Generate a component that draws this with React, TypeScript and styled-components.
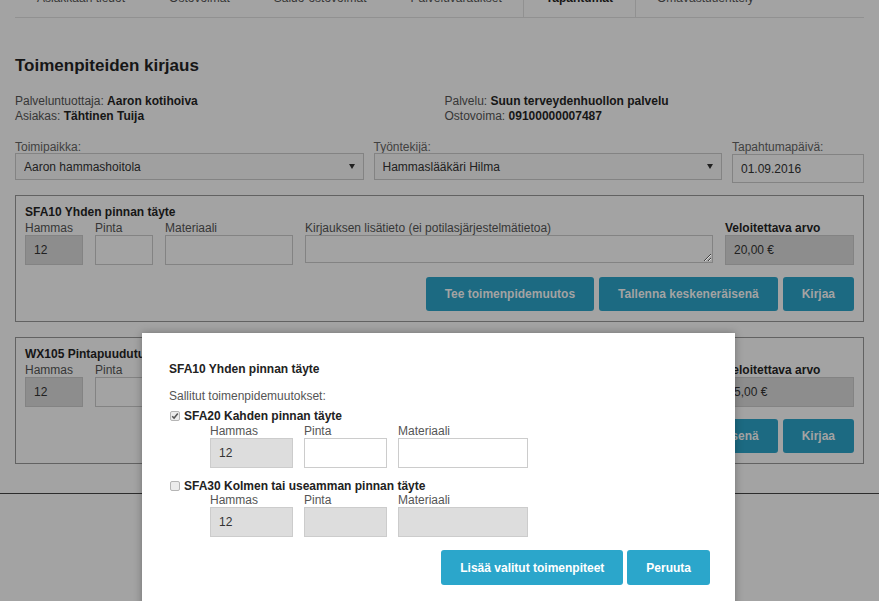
import React from "react";
import styled, { createGlobalStyle, ThemeProvider } from "styled-components";

type Palette = {
  bg: string;
  text: string;
  strong: string;
  muted: string;
  label: string;
  line: string;
  cardBorder: string;
  inputBorder: string;
  inputBg: string;
  selectBg: string;
  disabledBg: string;
  inputText: string;
  primary: string;
  onPrimary: string;
  rule: string;
  checkBorder: string;
  checkBg: string;
  checkMark: string;
};

/* Colours of the page as it looks normally */
const normal: Palette = {
  bg: "#ffffff",
  text: "#222222",
  strong: "#222222",
  muted: "#555555",
  label: "#666666",
  line: "#e3e3e3",
  cardBorder: "#999999",
  inputBorder: "#cccccc",
  inputBg: "#ffffff",
  selectBg: "#fafafa",
  disabledBg: "#dddddd",
  inputText: "#333333",
  primary: "#2ba6cb",
  onPrimary: "#ffffff",
  rule: "#444444",
  checkBorder: "#b5b5b5",
  checkBg: "#ececec",
  checkMark: "#555555",
};

/* The same colours seen through the modal's dark backdrop (black at 36%) */
const dim = (hex: string) => {
  const n = parseInt(hex.slice(1), 16);
  const ch = (v: number) => Math.round(v * 0.64).toString(16).padStart(2, "0");
  return `#${ch((n >> 16) & 255)}${ch((n >> 8) & 255)}${ch(n & 255)}`;
};

const dimmed: Palette = Object.fromEntries(
  Object.entries(normal).map(([k, v]) => [k, dim(v)])
) as Palette;

const GlobalStyle = createGlobalStyle`
  html, body { margin: 0; padding: 0; background: ${dimmed.bg}; overflow: hidden; }
  body {
    font-family: "Liberation Sans", Arial, Helvetica, sans-serif;
    font-size: 12px;
  }
  * { box-sizing: border-box; }
`;

const Screen = styled.div`
  position: relative;
  height: 601px;
  overflow: hidden;
`;

const Page = styled.div`
  height: 601px;
  padding: 0 15px;
  background: ${(p) => p.theme.bg};
  color: ${(p) => p.theme.text};
`;

const TabBar = styled.nav`
  display: flex;
  margin-top: -22px;
  height: 40px;
  border-bottom: 1px solid ${(p) => p.theme.line};
`;

const Tab = styled.div<{ $active?: boolean }>`
  display: flex;
  align-items: center;
  padding: 0 22px;
  font-size: 12px;
  color: ${(p) => (p.$active ? p.theme.strong : p.theme.muted)};
  font-weight: ${(p) => (p.$active ? 700 : 400)};
  border-left: 1px solid ${(p) => (p.$active ? p.theme.line : "transparent")};
  border-right: 1px solid ${(p) => (p.$active ? p.theme.line : "transparent")};
  margin: 0 -1px;
`;

const Title = styled.h1`
  margin: 38px 0 0;
  font-size: 17px;
  line-height: 20px;
  font-weight: 700;
  color: ${(p) => p.theme.strong};
`;

const InfoGrid = styled.div`
  display: grid;
  grid-template-columns: 1fr 1fr;
  column-gap: 10px;
  margin-top: 18px;
  line-height: 15px;
`;

const InfoLine = styled.div`
  color: ${(p) => p.theme.muted};
  b { color: ${(p) => p.theme.strong}; }
`;

const FieldsRow = styled.div`
  display: grid;
  grid-template-columns: 1fr 1fr 132px;
  column-gap: 10px;
  margin-top: 17px;
  align-items: start;
`;

const TopLabel = styled.label`
  display: block;
  line-height: 12px;
  color: ${(p) => p.theme.label};
`;

const SelectWrap = styled.div`
  position: relative;
  height: 27px;
`;

const Select = styled.select`
  appearance: none;
  width: 100%;
  height: 27px;
  border: 1px solid ${(p) => p.theme.inputBorder};
  background: ${(p) => p.theme.selectBg};
  padding: 0 8px;
  font: inherit;
  font-size: 12px;
  color: ${(p) => p.theme.inputText};
  outline: none;
`;

const Arrow = styled.svg`
  position: absolute;
  right: 9px;
  top: 11px;
  pointer-events: none;
  fill: ${(p) => p.theme.inputText};
`;

const DateInput = styled.input`
  display: block;
  width: 100%;
  height: 29px;
  margin-top: 1px;
  border: 1px solid ${(p) => p.theme.inputBorder};
  padding: 0 8px;
  font: inherit;
  font-size: 12px;
  color: ${(p) => p.theme.inputText};
  background: ${(p) => p.theme.inputBg};
`;

const Card = styled.section<{ $first?: boolean }>`
  margin-top: ${(p) => (p.$first ? "12px" : "15px")};
  border: 1px solid ${(p) => p.theme.cardBorder};
  padding: 10px 9px;
`;

const CardTitle = styled.div`
  font-weight: 700;
  line-height: 13px;
  color: ${(p) => p.theme.strong};
  white-space: nowrap;
`;

const CardGrid = styled.div`
  display: grid;
  grid-template-columns: 58px 58px 128px 1fr 129px;
  column-gap: 12px;
  margin-top: 2px;
`;

const FieldLabel = styled.div<{ $strong?: boolean }>`
  line-height: 14px;
  color: ${(p) => (p.$strong ? p.theme.strong : p.theme.muted)};
  font-weight: ${(p) => (p.$strong ? 700 : 400)};
  white-space: nowrap;
`;

const Input = styled.input`
  display: block;
  width: 100%;
  height: 30px;
  border: 1px solid ${(p) => p.theme.inputBorder};
  padding: 0 8px;
  font: inherit;
  font-size: 12px;
  color: ${(p) => p.theme.inputText};
  background: ${(p) => p.theme.inputBg};
  &:disabled {
    background: ${(p) => p.theme.disabledBg};
    color: ${(p) => p.theme.inputText};
    -webkit-text-fill-color: ${(p) => p.theme.inputText};
    opacity: 1;
  }
`;

const TextArea = styled.textarea`
  display: block;
  width: 100%;
  height: 28px;
  border: 1px solid ${(p) => p.theme.inputBorder};
  padding: 6px 8px;
  font: inherit;
  font-size: 12px;
  resize: both;
  background: ${(p) => p.theme.inputBg};
`;

const Actions = styled.div<{ $gap?: number; $top?: number }>`
  display: flex;
  justify-content: flex-end;
  gap: ${(p) => p.$gap ?? 5}px;
  margin-top: ${(p) => p.$top ?? 12}px;
`;

const Button = styled.button<{ $h?: number }>`
  height: ${(p) => p.$h ?? 34}px;
  padding: 0 19px;
  border: none;
  border-radius: 3px;
  background: ${(p) => p.theme.primary};
  color: ${(p) => p.theme.onPrimary};
  font-family: inherit;
  font-size: 12px;
  font-weight: 700;
  white-space: nowrap;
`;

const Rule = styled.hr`
  margin: 29px -15px 0;
  border: none;
  border-top: 1px solid ${(p) => p.theme.rule};
  height: 0;
`;

const Modal = styled.div`
  position: absolute;
  top: 333px;
  left: 142px;
  width: 593px;
  height: 300px;
  background: ${(p) => p.theme.bg};
  color: ${(p) => p.theme.text};
  box-shadow: 0 0 8px rgba(0, 0, 0, 0.3);
  padding: 30px 25px 0 27px;
  z-index: 11;
`;

const ModalTitle = styled.div`
  font-weight: 700;
  line-height: 13px;
  color: ${(p) => p.theme.strong};
`;

const Hint = styled.div`
  margin-top: 13px;
  line-height: 14px;
  color: ${(p) => p.theme.muted};
`;

const Option = styled.div<{ $top: number }>`
  margin-top: ${(p) => p.$top}px;
`;

const OptionHeader = styled.label`
  display: flex;
  align-items: center;
  font-weight: 700;
  line-height: 14px;
  color: ${(p) => p.theme.strong};
`;

const Check = styled.span`
  display: inline-flex;
  align-items: center;
  justify-content: center;
  width: 10px;
  height: 10px;
  margin: 0 4px 0 1px;
  border: 1px solid ${(p) => p.theme.checkBorder};
  border-radius: 2px;
  background: ${(p) => p.theme.checkBg};
  svg { stroke: ${(p) => p.theme.checkMark}; }
`;

const SubGrid = styled.div<{ $top: number }>`
  display: grid;
  grid-template-columns: 83px 83px 130px;
  column-gap: 11px;
  padding-left: 41px;
  margin-top: ${(p) => p.$top}px;
`;

const SubLabel = styled.div`
  line-height: 13px;
  color: ${(p) => p.theme.muted};
`;

type CardData = {
  title: string;
  tooth: string;
  price: string;
};

const cards: CardData[] = [
  { title: "SFA10 Yhden pinnan täyte", tooth: "12", price: "20,00 €" },
  { title: "WX105 Pintapuudutus", tooth: "12", price: "5,00 €" },
];

const tabs = [
  "Asiakkaan tiedot",
  "Ostovoimat",
  "Saldo-ostovoimat",
  "Palveluvaraukset",
  "Tapahtumat",
  "Omavastuuerittely",
];

const CheckBox = ({ checked }: { checked?: boolean }) => (
  <Check>
    {checked && (
      <svg width="8" height="8" viewBox="0 0 8 8">
        <path d="M1.2 4.2 L3.1 6.1 L6.8 1.6" fill="none" strokeWidth="1.5" />
      </svg>
    )}
  </Check>
);

const ProcedureCard = ({ data, first }: { data: CardData; first?: boolean }) => (
  <Card $first={first}>
    <CardTitle>{data.title}</CardTitle>
    <CardGrid>
      <div>
        <FieldLabel>Hammas</FieldLabel>
        <Input disabled defaultValue={data.tooth} />
      </div>
      <div>
        <FieldLabel>Pinta</FieldLabel>
        <Input />
      </div>
      <div>
        <FieldLabel>Materiaali</FieldLabel>
        <Input />
      </div>
      <div>
        <FieldLabel>Kirjauksen lisätieto (ei potilasjärjestelmätietoa)</FieldLabel>
        <TextArea />
      </div>
      <div>
        <FieldLabel $strong>Veloitettava arvo</FieldLabel>
        <Input disabled defaultValue={data.price} />
      </div>
    </CardGrid>
    <Actions>
      <Button>Tee toimenpidemuutos</Button>
      <Button>Tallenna keskeneräisenä</Button>
      <Button>Kirjaa</Button>
    </Actions>
  </Card>
);

const SubFields = ({ top, enabled }: { top: number; enabled: boolean }) => (
  <SubGrid $top={top}>
    <div>
      <SubLabel>Hammas</SubLabel>
      <Input disabled defaultValue="12" />
    </div>
    <div>
      <SubLabel>Pinta</SubLabel>
      <Input disabled={!enabled} />
    </div>
    <div>
      <SubLabel>Materiaali</SubLabel>
      <Input disabled={!enabled} />
    </div>
  </SubGrid>
);

const SelectField = ({ label, value }: { label: string; value: string }) => (
  <div>
    <TopLabel>{label}</TopLabel>
    <SelectWrap>
      <Select defaultValue="v">
        <option value="v">{value}</option>
      </Select>
      <Arrow width="6" height="5" viewBox="0 0 6 5">
        <path d="M0 0 H6 L3 5 Z" />
      </Arrow>
    </SelectWrap>
  </div>
);

export default function App() {
  return (
    <Screen>
      <GlobalStyle />
      <ThemeProvider theme={dimmed}>
        <Page>
          <TabBar>
            {tabs.map((t) => (
              <Tab key={t} $active={t === "Tapahtumat"}>
                {t}
              </Tab>
            ))}
          </TabBar>
          <Title>Toimenpiteiden kirjaus</Title>
          <InfoGrid>
            <div>
              <InfoLine>
                Palveluntuottaja: <b>Aaron kotihoiva</b>
              </InfoLine>
              <InfoLine>
                Asiakas: <b>Tähtinen Tuija</b>
              </InfoLine>
            </div>
            <div>
              <InfoLine>
                Palvelu: <b>Suun terveydenhuollon palvelu</b>
              </InfoLine>
              <InfoLine>
                Ostovoima: <b>09100000007487</b>
              </InfoLine>
            </div>
          </InfoGrid>
          <FieldsRow>
            <SelectField label="Toimipaikka:" value="Aaron hammashoitola" />
            <SelectField label="Työntekijä:" value="Hammaslääkäri Hilma" />
            <div>
              <TopLabel>Tapahtumapäivä:</TopLabel>
              <DateInput defaultValue="01.09.2016" />
            </div>
          </FieldsRow>
          {cards.map((c, i) => (
            <ProcedureCard key={c.title} data={c} first={i === 0} />
          ))}
          <Rule />
        </Page>
      </ThemeProvider>
      <ThemeProvider theme={normal}>
        <Modal>
          <ModalTitle>SFA10 Yhden pinnan täyte</ModalTitle>
          <Hint>Sallitut toimenpidemuutokset:</Hint>
          <Option $top={6}>
            <OptionHeader>
              <CheckBox checked />
              SFA20 Kahden pinnan täyte
            </OptionHeader>
            <SubFields top={2} enabled />
          </Option>
          <Option $top={11}>
            <OptionHeader>
              <CheckBox />
              SFA30 Kolmen tai useamman pinnan täyte
            </OptionHeader>
            <SubFields top={1} enabled={false} />
          </Option>
          <Actions $gap={4} $top={13}>
            <Button $h={35}>Lisää valitut toimenpiteet</Button>
            <Button $h={35}>Peruuta</Button>
          </Actions>
        </Modal>
      </ThemeProvider>
    </Screen>
  );
}
